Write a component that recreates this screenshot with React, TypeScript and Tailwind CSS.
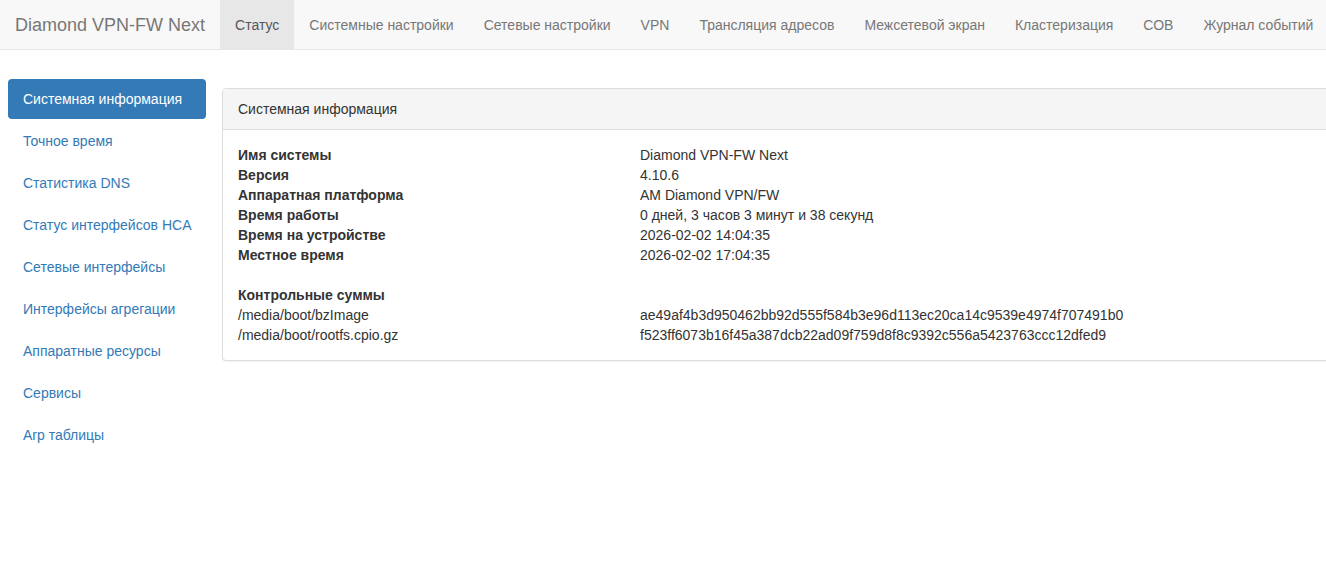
import React from 'react';

const NAV = [
  'Статус',
  'Системные настройки',
  'Сетевые настройки',
  'VPN',
  'Трансляция адресов',
  'Межсетевой экран',
  'Кластеризация',
  'СОВ',
  'Журнал событий',
];

const SIDE = [
  'Системная информация',
  'Точное время',
  'Статистика DNS',
  'Статус интерфейсов HCA',
  'Сетевые интерфейсы',
  'Интерфейсы агрегации',
  'Аппаратные ресурсы',
  'Сервисы',
  'Arp таблицы',
];

const INFO: [string, string][] = [
  ['Имя системы', 'Diamond VPN-FW Next'],
  ['Версия', '4.10.6'],
  ['Аппаратная платформа', 'AM Diamond VPN/FW'],
  ['Время работы', '0 дней, 3 часов 3 минут и 38 секунд'],
  ['Время на устройстве', '2026-02-02 14:04:35'],
  ['Местное время', '2026-02-02 17:04:35'],
];

const SUMS: [string, string][] = [
  ['/media/boot/bzImage', 'ae49af4b3d950462bb92d555f584b3e96d113ec20ca14c9539e4974f707491b0'],
  ['/media/boot/rootfs.cpio.gz', 'f523ff6073b16f45a387dcb22ad09f759d8f8c9392c556a5423763ccc12dfed9'],
];

export default function App() {
  return (
    <div
      className="min-h-[575px] w-full overflow-hidden bg-white text-[14px] leading-[20px] text-[#333]"
      style={{ fontFamily: '"Liberation Sans", Arial, sans-serif' }}
    >
      {/* верхнее меню */}
      <div className="flex h-[50px] border-b border-[#e7e7e7] bg-[#f8f8f8] whitespace-nowrap">
        <div className="px-[15px] py-[15px] text-[18px] leading-[20px] text-[#777]">Diamond VPN-FW Next</div>
        <div className="flex">
          {NAV.map((n, i) => (
            <div
              key={n}
              className={
                i === 0
                  ? 'px-[15px] py-[15px] h-[49px] bg-[#e7e7e7] text-[#555]'
                  : 'px-[15px] py-[15px] h-[49px] text-[#777]'
              }
            >
              {n}
            </div>
          ))}
        </div>
      </div>

      <div className="flex pt-[29px] pl-[8px]">
        {/* боковое меню */}
        <div className="flex w-[198px] shrink-0 flex-col gap-[2px] whitespace-nowrap">
          {SIDE.map((s, i) => (
            <div
              key={s}
              className={
                i === 0
                  ? 'rounded-[4px] bg-[#337ab7] px-[15px] py-[10px] text-white'
                  : 'rounded-[4px] px-[15px] py-[10px] text-[#337ab7]'
              }
            >
              {s}
            </div>
          ))}
        </div>

        {/* панель */}
        <div className="ml-[16px] mt-[9px] w-[1130px] shrink-0 self-start rounded-[4px] border border-[#ddd] bg-white shadow-[0_1px_1px_rgba(0,0,0,0.05)]">
          <div className="rounded-t-[3px] border-b border-[#ddd] bg-[#f5f5f5] px-[15px] py-[10px] text-[#333]">
            Системная информация
          </div>
          <div className="p-[15px]">
            {INFO.map(([k, v]) => (
              <div key={k} className="flex">
                <div className="w-[402px] shrink-0 font-bold">{k}</div>
                <div>{v}</div>
              </div>
            ))}
            <div className="h-[20px]" />
            <div className="font-bold">Контрольные суммы</div>
            {SUMS.map(([k, v]) => (
              <div key={k} className="flex">
                <div className="w-[402px] shrink-0">{k}</div>
                <div>{v}</div>
              </div>
            ))}
          </div>
        </div>
      </div>
    </div>
  );
}
